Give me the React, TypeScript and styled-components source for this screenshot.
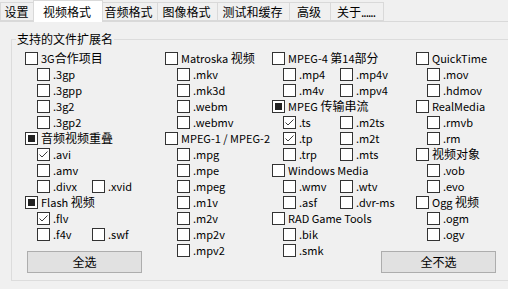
import React from 'react'
import styled, { createGlobalStyle } from 'styled-components'

type CheckState = 'off' | 'on' | 'mixed'
type Ext = { name: string; state?: CheckState }
type Line = { head: string; state?: CheckState } | { exts: Ext[] }
type ColumnDef = { width: number; pair: number; indent: number; lines: Line[]; button?: { label: string; shift: number } }

const GlobalStyle = createGlobalStyle`
  html, body {
    margin: 0;
    padding: 0;
    background: #f0f0f0;
    overflow: hidden;
  }
  body {
    font-family: "Noto Sans CJK SC", "Noto Sans", sans-serif;
    font-size: 11px;
    color: #000;
  }
`

const Window = styled.div`
  width: 508px;
  height: 289px;
  display: flex;
  flex-direction: column;
  overflow: hidden;
`

const TabStrip = styled.div`
  display: flex;
  align-items: flex-end;
  height: 21px;
  flex-shrink: 0;
`

const Tab = styled.div<{ $active?: boolean; $w: number }>`
  box-sizing: border-box;
  width: ${p => p.$w}px;
  height: ${p => (p.$active ? 22 : 19)}px;
  margin: ${p => (p.$active ? '0 -2px -1px -1px' : '0 -1px 0 0')};
  padding-right: 2px;
  border: 1px solid #d9d9d9;
  border-bottom: ${p => (p.$active ? 'none' : '1px solid #d9d9d9')};
  background: ${p => (p.$active ? '#ffffff' : '#f0f0f0')};
  position: relative;
  z-index: ${p => (p.$active ? 1 : 0)};
  display: flex;
  align-items: center;
  justify-content: center;
  font-size: 12px;
  line-height: 16px;
  white-space: nowrap;
`

const Dots = styled.span`
  letter-spacing: -1px;
`

const Page = styled.div`
  flex: 1;
  border-top: 1px solid #d9d9d9;
  padding: 9px 0 0 11px;
  background: #f0f0f0;
`

const Group = styled.fieldset`
  margin: 0;
  padding: 0;
  width: 500px;
  border: 1px solid #dcdcdc;
  border-radius: 0;
`

const Legend = styled.legend`
  margin-left: 4px;
  padding: 0 1px;
  font-size: 12px;
  line-height: 16px;
`

const Columns = styled.div<{ $tracks: string }>`
  display: grid;
  grid-template-columns: ${p => p.$tracks};
  padding: 3px 0 7px 13px;
  align-items: start;
`

const Column = styled.div`
  display: flex;
  flex-direction: column;
`

const Row = styled.div<{ $indent: number }>`
  display: flex;
  align-items: center;
  height: 16px;
  padding-left: ${p => p.$indent}px;
`

const Item = styled.label<{ $w?: number }>`
  display: flex;
  align-items: center;
  gap: 3px;
  width: ${p => (p.$w ? `${p.$w}px` : 'auto')};
  flex-shrink: 0;
  line-height: 16px;
  white-space: nowrap;
`

const Box = styled.span`
  box-sizing: border-box;
  width: 13px;
  height: 13px;
  border: 1px solid #333333;
  background: #ffffff;
  display: flex;
  align-items: center;
  justify-content: center;
  flex-shrink: 0;
`

const Mixed = styled.span`
  width: 7px;
  height: 7px;
  background: #222222;
`

const Han = styled.span`
  font-size: 12px;
`

const Button = styled.button<{ $shift: number }>`
  box-sizing: border-box;
  width: 115px;
  height: 22px;
  margin: 9px 0 0 ${p => p.$shift}px;
  padding: 0;
  border: 1px solid #adadad;
  border-radius: 0;
  background: #e1e1e1;
  font-family: inherit;
  font-size: 12px;
  line-height: 16px;
  color: #000;
`

const Text = ({ children }: { children: string }) => (
  <span>
    {children.split(/([\u3400-\u9fff]+)/).map((part, i) => (i % 2 ? <Han key={i}>{part}</Han> : part))}
  </span>
)

const Check = ({ state = 'off' }: { state?: CheckState }) => (
  <Box>
    {state === 'mixed' && <Mixed />}
    {state === 'on' && (
      <svg width="11" height="11" viewBox="0 0 11 11">
        <polyline points="1.5,5.5 4,8 9.5,2.5" fill="none" stroke="#3c3c3c" strokeWidth="1" />
      </svg>
    )}
  </Box>
)

const head = (label: string, state?: CheckState): Line => ({ head: label, state })
const ext = (...names: (string | Ext)[]): Line => ({
  exts: names.map(n => (typeof n === 'string' ? { name: n } : n)),
})
const on = (name: string): Ext => ({ name, state: 'on' })

const columns: ColumnDef[] = [
  {
    width: 140,
    pair: 55,
    indent: 12,
    lines: [
      head('3G合作项目'),
      ext('.3gp'),
      ext('.3gpp'),
      ext('.3g2'),
      ext('.3gp2'),
      head('音频视频重叠', 'mixed'),
      ext(on('.avi')),
      ext('.amv'),
      ext('.divx', '.xvid'),
      head('Flash 视频', 'mixed'),
      ext(on('.flv')),
      ext('.f4v', '.swf'),
    ],
    button: { label: '全选', shift: 2 },
  },
  {
    width: 107,
    pair: 55,
    indent: 12,
    lines: [
      head('Matroska 视频'),
      ext('.mkv'),
      ext('.mk3d'),
      ext('.webm'),
      ext('.webmv'),
      head('MPEG-1 / MPEG-2'),
      ext('.mpg'),
      ext('.mpe'),
      ext('.mpeg'),
      ext('.m1v'),
      ext('.m2v'),
      ext('.mp2v'),
      ext('.mpv2'),
    ],
  },
  {
    width: 144,
    pair: 57,
    indent: 11,
    lines: [
      head('MPEG-4 第14部分'),
      ext('.mp4', '.mp4v'),
      ext('.m4v', '.mpv4'),
      head('MPEG 传输串流', 'mixed'),
      ext(on('.ts'), '.m2ts'),
      ext(on('.tp'), '.m2t'),
      ext('.trp', '.mts'),
      head('Windows Media'),
      ext('.wmv', '.wtv'),
      ext('.asf', '.dvr-ms'),
      head('RAD Game Tools'),
      ext('.bik'),
      ext('.smk'),
    ],
  },
  {
    width: 80,
    pair: 55,
    indent: 11,
    lines: [
      head('QuickTime'),
      ext('.mov'),
      ext('.hdmov'),
      head('RealMedia'),
      ext('.rmvb'),
      ext('.rm'),
      head('视频对象'),
      ext('.vob'),
      ext('.evo'),
      head('Ogg 视频'),
      ext('.ogm'),
      ext('.ogv'),
    ],
    button: { label: '全不选', shift: -35 },
  },
]

const tabs = [
  { label: '设置', w: 35 },
  { label: '视频格式', w: 70, active: true },
  { label: '音频格式', w: 57 },
  { label: '图像格式', w: 61 },
  { label: '测试和缓存', w: 73 },
  { label: '高级', w: 42 },
  { label: '关于', w: 54, dots: true },
]

export default function App() {
  return (
    <Window>
      <GlobalStyle />
      <TabStrip>
        {tabs.map(t => (
          <Tab key={t.label} $w={t.w} $active={t.active}>
            {t.label}
            {t.dots && <Dots>......</Dots>}
          </Tab>
        ))}
      </TabStrip>
      <Page>
        <Group>
          <Legend>支持的文件扩展名</Legend>
          <Columns $tracks={columns.map(c => `${c.width}px`).join(' ')}>
            {columns.map((col, ci) => (
              <Column key={ci}>
                {col.lines.map((line, li) =>
                  'head' in line ? (
                    <Row key={li} $indent={0}>
                      <Item>
                        <Check state={line.state} />
                        <Text>{line.head}</Text>
                      </Item>
                    </Row>
                  ) : (
                    <Row key={li} $indent={col.indent}>
                      {line.exts.map((e, ei) => (
                        <Item key={e.name} $w={ei === 0 && line.exts.length > 1 ? col.pair : undefined}>
                          <Check state={e.state} />
                          <Text>{e.name}</Text>
                        </Item>
                      ))}
                    </Row>
                  )
                )}
                {col.button && <Button $shift={col.button.shift}>{col.button.label}</Button>}
              </Column>
            ))}
          </Columns>
        </Group>
      </Page>
    </Window>
  )
}
